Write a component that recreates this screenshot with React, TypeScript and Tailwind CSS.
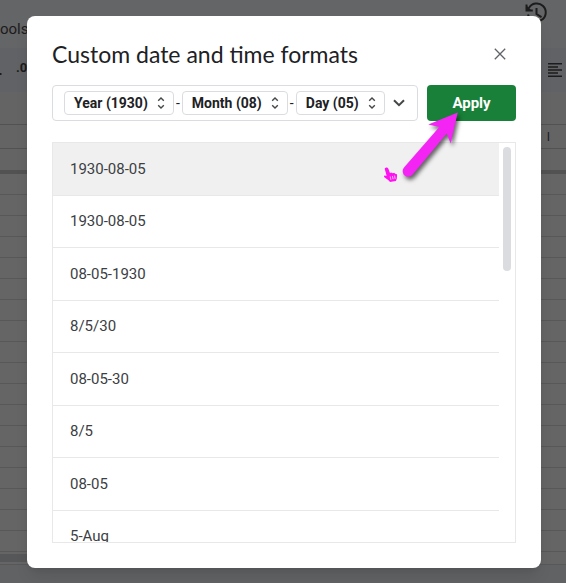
import { useState } from "react";

const formats = [
  "1930-08-05",
  "1930-08-05",
  "08-05-1930",
  "8/5/30",
  "08-05-30",
  "8/5",
  "08-05",
  "5-Aug",
];

const tokens = ["Year (1930)", "Month (08)", "Day (05)"];

const sheetRows = Array.from({ length: 18 }, (_, i) => i);

function HistoryIcon() {
  return (
    <svg width="24" height="24" viewBox="0 0 24 24" fill="none" stroke="#1c1c1c" strokeWidth="2" aria-hidden="true">
      <path d="M4.8 8.2A9 9 0 1 1 4 14.5" />
      <path d="M2.5 4.5v6h6.3" />
      <path d="M2.5 5.5v5h5z" fill="#1c1c1c" stroke="none" />
      <path d="M12.5 8v6l5 3.2" />
    </svg>
  );
}

function AlignLeftIcon() {
  return (
    <svg width="14" height="14" viewBox="0 0 14 14" stroke="#1c1c1c" strokeWidth="1.5" aria-hidden="true">
      <path d="M0 .8h14M0 3.9h10M0 7h14M0 10.1h10M0 13.2h14" />
    </svg>
  );
}

function Sheet() {
  return (
    <div className="flex h-screen flex-col overflow-hidden bg-[#646567]" aria-hidden="true">
      <div className="flex h-12 shrink-0 justify-between">
        <span className="pt-[19px] text-[15px] leading-5 text-[#1c1c1c]">ools</span>
        <div className="pr-[18px]">
          <HistoryIcon />
        </div>
      </div>
      <div className="flex h-11 shrink-0 items-center justify-between bg-[#606265]">
        <div className="flex items-center gap-[14px] text-[13px] font-bold text-[#1c1c1c]">
          <svg width="2" height="16" viewBox="0 0 2 16" fill="#1c1c1c">
            <path d="M0 11h1.5v2H0z" />
          </svg>
          <span className="pb-1">.00</span>
        </div>
        <div className="pr-1">
          <AlignLeftIcon />
        </div>
      </div>
      <div className="h-8 shrink-0 bg-[#646464]" />
      <div className="flex h-[25px] shrink-0 items-center justify-end border-y border-[#525252] bg-[#646464] pr-4 text-xs text-[#1c1c1c]">
        I
      </div>
      <div className="h-[21px] shrink-0 bg-[#646464]" />
      <div className="h-1 shrink-0 bg-[#525252]" />
      <div className="shrink-0 bg-[#656565]">
        {sheetRows.map((row) => (
          <div key={row} className="h-[21px] border-b border-[#585858]" />
        ))}
      </div>
      <div className="flex h-[13px] shrink-0 border-b border-[#585858] bg-[#656565]">
        <div className="my-[2px] w-1/2 bg-[#565758]" />
      </div>
      <div className="grow bg-[#606264]" />
    </div>
  );
}

function TokenButton({ label }: { label: string }) {
  return (
    <button
      type="button"
      className="flex h-6 items-center gap-[9px] rounded border border-[#dadce0] pr-2 pl-[9px] text-sm font-bold whitespace-nowrap text-[#202124]"
    >
      {label}
      <svg width="8" height="12" viewBox="0 0 8 12" fill="none" stroke="#444746" strokeWidth="1.4" aria-hidden="true">
        <path d="M1.2 3.8 4 1l2.8 2.8M1.2 8.2 4 11l2.8-2.8" />
      </svg>
    </button>
  );
}

function Pointers() {
  return (
    <svg
      className="pointer-events-none absolute top-[90px] right-[70px]"
      width="96"
      height="84"
      viewBox="375 106 96 84"
      aria-hidden="true"
    >
      <path
        d="M457.7 112.5 428.3 124.5 439.3 127 404 167.5A5.5 5.5 0 0 0 412.5 174.8L446.7 133.5 450.7 143.5Z"
        fill="#f425f4"
        style={{ filter: "drop-shadow(2px 3px 2px rgba(0,0,0,.6))" }}
      />
      <path
        d="M386.2 167.6c1.1-.4 1.9.3 2.2 1.2l1.6 4.2 1.6-.5 1.2.7 1.4-.5 1 1 1.5.2.4 1.6-.3 3.3-.8 2.2-6 1.1-1.6-1.9-4.4-3.2.2-1.6 2.4.3-1.8-6.4c-.3-.8.2-1.4 1.4-1.7z"
        fill="#ff12f0"
        stroke="#fff"
        strokeWidth="1"
        paintOrder="stroke"
      />
      <path d="M390.2 176.5l.7 3.2M392.4 176l.7 3.2M394.6 175.6l.5 3.2" stroke="#fff" strokeWidth=".7" />
    </svg>
  );
}

export default function App() {
  const [selected, setSelected] = useState(0);

  return (
    <div className="relative font-[Roboto,sans-serif]">
      <Sheet />
      <div className="absolute inset-0 pt-4 pr-[25px] pl-[27px]">
        <div
          role="dialog"
          aria-labelledby="dialog-title"
          className="relative rounded-lg bg-white px-[25px] pt-[23px] pb-[25px] shadow-lg"
        >
          <div className="mb-4 flex h-[30px] items-center justify-between">
            <h1 id="dialog-title" className="font-[Lato,sans-serif] text-[23px] leading-[30px] text-[#202124]">
              Custom date and time formats
            </h1>
            <button type="button" aria-label="Close" className="mr-[10px]">
              <svg width="12" height="12" viewBox="0 0 12 12" stroke="#5f6368" strokeWidth="1.3" aria-hidden="true">
                <path d="M.8.8l10.4 10.4M11.2.8.8 11.2" />
              </svg>
            </button>
          </div>

          <div className="flex gap-[9px]">
            <div className="flex h-9 grow items-center justify-between rounded border border-[#dadce0] pr-3 pl-[11px]">
              <div className="flex items-center">
                {tokens.map((token, i) => (
                  <div key={token} className="flex items-center">
                    {i > 0 && <span className="w-2 text-center text-sm text-[#202124]">-</span>}
                    <TokenButton label={token} />
                  </div>
                ))}
              </div>
              <button type="button" aria-label="Add token">
                <svg width="12" height="8" viewBox="0 0 12 8" fill="none" stroke="#444746" strokeWidth="2" aria-hidden="true">
                  <path d="M1 1.2l5 5 5-5" />
                </svg>
              </button>
            </div>
            <button type="button" className="h-9 w-[89px] shrink-0 rounded bg-[#188038] text-[15px] font-bold text-white">
              Apply
            </button>
          </div>

          <div className="mt-[21px] flex h-[401px] overflow-hidden border border-[#e8e8e8]">
            <ul className="grid h-[420px] grow grid-rows-8">
              {formats.map((format, i) => (
                <li key={i} className="border-b border-[#e8e8e8]">
                  <button
                    type="button"
                    onClick={() => setSelected(i)}
                    className={`h-full w-full pl-[17px] text-left text-[15px] text-[#3c4043] ${
                      i === selected ? "bg-[#f0f0f0]" : "bg-white"
                    }`}
                  >
                    {format}
                  </button>
                </li>
              ))}
            </ul>
            <div className="w-4 shrink-0 pt-1 pr-1 pl-1">
              <div className="h-[124px] rounded-full bg-[#dadce0]" />
            </div>
          </div>
          <Pointers />
        </div>
      </div>
    </div>
  );
}
